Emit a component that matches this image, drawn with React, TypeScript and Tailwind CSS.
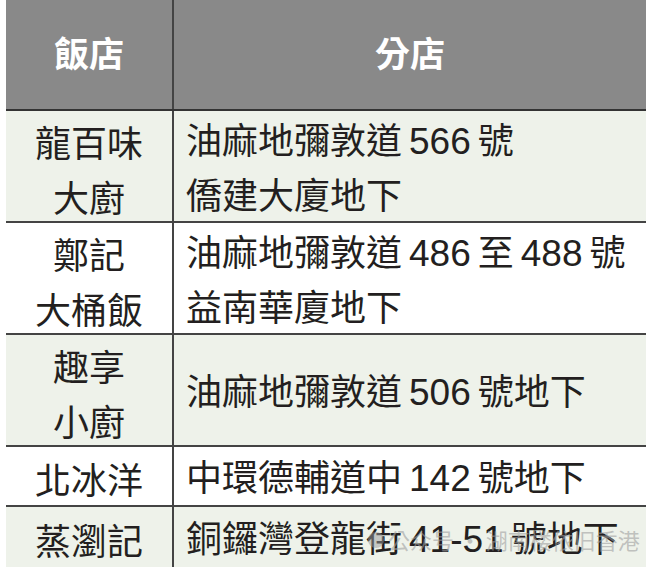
import React from 'react';

interface Row {
  name: string[];
  address: string[];
  height: string;
  green: boolean;
}

const rows: Row[] = [
  { name: ['龍百味', '大廚'], address: ['油麻地彌敦道 566 號', '僑建大廈地下'], height: 'h-[112px]', green: true },
  { name: ['鄭記', '大桶飯'], address: ['油麻地彌敦道 486 至 488 號', '益南華廈地下'], height: 'h-[112px]', green: false },
  { name: ['趣享', '小廚'], address: ['油麻地彌敦道 506 號地下'], height: 'h-[112px]', green: true },
  { name: ['北冰洋'], address: ['中環德輔道中 142 號地下'], height: 'h-[60px]', green: false },
  { name: ['蒸瀏記'], address: ['銅鑼灣登龍街 41-51 號地下'], height: 'h-[60px]', green: true },
];

// digits in the print run a touch larger than the hanzi
function Address({ text }: { text: string }) {
  const parts = text.split(/([0-9-]+)/);
  return (
    <span>
      {parts.map((p, i) =>
        /[0-9]/.test(p) ? (
          <span key={i} className="text-[37px]">{p}</span>
        ) : (
          <span key={i}>{p}</span>
        )
      )}
    </span>
  );
}

export default function App() {
  return (
    <div
      className="w-[646px] h-[570px] overflow-hidden bg-white pl-[6px] text-[#231f20]"
      style={{ fontFamily: '"Noto Sans CJK TC", "Noto Sans", sans-serif' }}
    >
      <div className="flex flex-col">
        {/* header */}
        <div className="flex h-[111px] bg-[#898989] border-b-2 border-[#333]">
          <div className="w-[168px] flex items-center justify-center border-r-2 border-[#444] text-white font-bold text-[35px] pb-[4px]">
            飯店
          </div>
          <div className="flex-1 flex items-center justify-center text-white font-bold text-[35px] pb-[4px]">
            分店
          </div>
        </div>

        {rows.map((row, i) => (
          <div
            key={i}
            className={`relative flex ${row.height} ${row.green ? 'bg-[#eef2ea]' : 'bg-white'} ${i < rows.length - 1 ? 'border-b-2 border-[#444]' : ''}`}
          >
            <div className="w-[168px] flex flex-col items-center justify-center pt-[5px] border-r-2 border-[#444] text-[36px] leading-[55px]">
              {row.name.map((n) => (
                <span key={n}>{n}</span>
              ))}
            </div>
            <div className="flex-1 flex flex-col justify-center pt-[5px] pl-[12px] text-[36px] leading-[55px] whitespace-nowrap [word-spacing:-3px] font-['Liberation_Sans','Noto_Sans_CJK_TC',sans-serif]">
              {row.address.map((a) => (
                <Address key={a} text={a} />
              ))}
            </div>
            {i === rows.length - 1 && (
              <div className="absolute left-[362px] top-[16px] flex items-center gap-[4px] text-[22px] text-[#a0a0a0]/60 whitespace-nowrap">
                <span className="w-[16px] h-[16px] rounded-full bg-[#9a9a9a]/50" />
                <span>公众号 · 湖南楼依旧香港</span>
              </div>
            )}
          </div>
        ))}
      </div>
    </div>
  );
}
